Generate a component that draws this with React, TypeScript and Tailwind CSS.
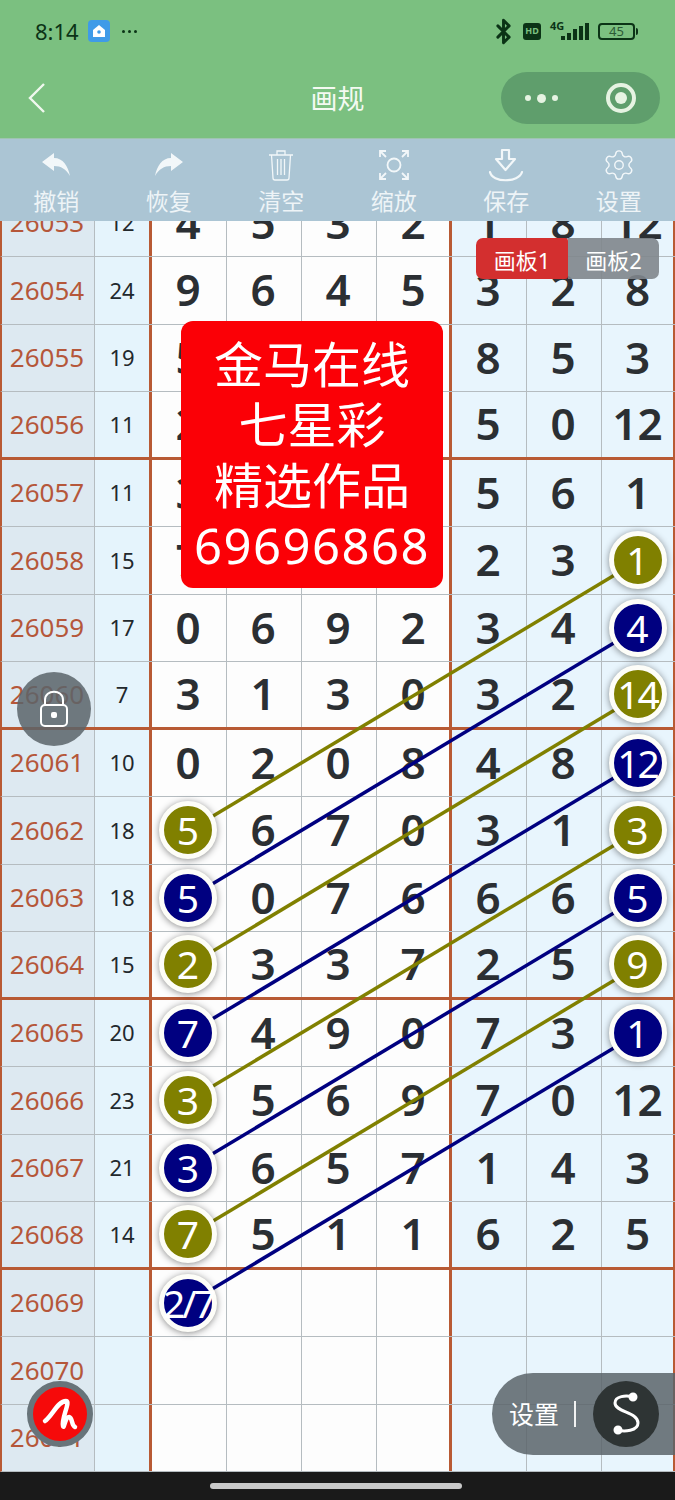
import React from 'react';
import { Bluetooth, Settings } from 'lucide-react';

type Ball = { v: string; c: 'o' | 'n' };
type Row = { id: string; sum?: string; left: (string | Ball)[]; right: (string | Ball)[]; thick?: boolean };

const o = (v: string): Ball => ({ v, c: 'o' });
const n = (v: string): Ball => ({ v, c: 'n' });

const rows: Row[] = [
  { id: '26053', sum: '12', left: ['4', '5', '3', '2'], right: ['1', '8', '12'] },
  { id: '26054', sum: '24', left: ['9', '6', '4', '5'], right: ['3', '2', '8'] },
  { id: '26055', sum: '19', left: ['5', '', '', ''], right: ['8', '5', '3'] },
  { id: '26056', sum: '11', left: ['2', '', '', ''], right: ['5', '0', '12'], thick: true },
  { id: '26057', sum: '11', left: ['3', '', '', ''], right: ['5', '6', '1'] },
  { id: '26058', sum: '15', left: ['7', '', '', ''], right: ['2', '3', o('1')] },
  { id: '26059', sum: '17', left: ['0', '6', '9', '2'], right: ['3', '4', n('4')] },
  { id: '26060', sum: '7', left: ['3', '1', '3', '0'], right: ['3', '2', o('14')], thick: true },
  { id: '26061', sum: '10', left: ['0', '2', '0', '8'], right: ['4', '8', n('12')] },
  { id: '26062', sum: '18', left: [o('5'), '6', '7', '0'], right: ['3', '1', o('3')] },
  { id: '26063', sum: '18', left: [n('5'), '0', '7', '6'], right: ['6', '6', n('5')] },
  { id: '26064', sum: '15', left: [o('2'), '3', '3', '7'], right: ['2', '5', o('9')], thick: true },
  { id: '26065', sum: '20', left: [n('7'), '4', '9', '0'], right: ['7', '3', n('1')] },
  { id: '26066', sum: '23', left: [o('3'), '5', '6', '9'], right: ['7', '0', '12'] },
  { id: '26067', sum: '21', left: [n('3'), '6', '5', '7'], right: ['1', '4', '3'] },
  { id: '26068', sum: '14', left: [o('7'), '5', '1', '1'], right: ['6', '2', '5'], thick: true },
  { id: '26069', left: [n('2/7'), '', '', ''], right: ['', '', ''] },
  { id: '26070', left: ['', '', '', ''], right: ['', '', ''] },
  { id: '26071', left: ['', '', '', ''], right: ['', '', ''] },
];

const Cell = ({ value, blue, last, edge }: { value: string | Ball; blue?: boolean; last?: boolean; edge?: boolean }) => {
  const isBall = typeof value !== 'string';
  let border = 'w-[75px] border-r border-[#b5bcc0] pr-[2px]';
  if (last) border = 'flex-1 border-r-2 border-[#b85a34]';
  if (edge) border = 'w-[75px] border-r-[3px] border-[#b85a34]';
  return (
    <div className={`flex items-center justify-center ${border} ${blue ? 'bg-[#e8f5fd]' : 'bg-[#fdfdfd]'}`}>
      {isBall ? (
        <div
          className={`relative z-20 flex h-[58px] w-[58px] items-center justify-center rounded-full border-[5px] border-[#fdfdf8] text-[39px] font-normal text-white shadow-[0_1px_7px_rgba(0,0,0,0.45)] ${value.c === 'o' ? 'bg-[#808000]' : 'bg-[#000080]'} ${value.v.length > 2 ? 'tracking-[-3px] text-[36px]' : value.v.length > 1 ? 'tracking-[-2px]' : ''}`}
        >
          {value.v}
        </div>
      ) : (
        <span className="pb-[2px] text-[44px] font-semibold text-[#2b2f33]">{value}</span>
      )}
    </div>
  );
};

const ReplyIcon = ({ flip }: { flip?: boolean }) => (
  <svg width="30" height="28" viewBox="0 0 30 28" fill="#f2f7f9" className={flip ? '-scale-x-100' : ''}>
    <path d="M1 11 L13 2 V7 C22 7 27 15 29 25 C25 18 20 15 13 15 V20 Z" />
  </svg>
);

const TrashIcon = () => (
  <svg width="26" height="32" viewBox="0 0 26 32" fill="none" stroke="#f2f7f9" strokeWidth="1.3">
    <path d="M1 6 H25 M9 6 V2 H17 V6" />
    <path d="M3.5 6 L5 29 C5 30 6 31 7 31 H19 C20 31 21 30 21 29 L22.5 6" />
    <path d="M9.5 10 V26 M13 10 V26 M16.5 10 V26" />
  </svg>
);

const ZoomIcon = () => (
  <svg width="32" height="32" viewBox="0 0 32 32" fill="none" stroke="#f2f7f9" strokeWidth="1.8">
    <circle cx="16" cy="16" r="6.5" />
    <path d="M2 8 V2 H8 M2 2 L8 8 M24 2 H30 V8 M30 2 L24 8 M2 24 V30 H8 M2 30 L8 24 M24 30 H30 V24 M30 30 L24 24" />
  </svg>
);

const SaveIcon = () => (
  <svg width="36" height="34" viewBox="0 0 36 34" fill="none" stroke="#f2f7f9" strokeWidth="2.2" strokeLinejoin="round" strokeLinecap="round">
    <path d="M14 2 H21 V11 H27 L17.5 22 L8 11 H14 Z" />
    <path d="M2 24 C4 35 31 35 34 24" />
  </svg>
);

const tools = [
  { label: '撤销', icon: <ReplyIcon /> },
  { label: '恢复', icon: <ReplyIcon flip /> },
  { label: '清空', icon: <TrashIcon /> },
  { label: '缩放', icon: <ZoomIcon /> },
  { label: '保存', icon: <SaveIcon /> },
  { label: '设置', icon: <Settings size={34} strokeWidth={1} color="#f2f7f9" /> },
];

// ball links, y relative to the grid top
const links = [
  { c: '#808000', row: 0 },
  { c: '#000080', row: 1 },
  { c: '#808000', row: 2 },
  { c: '#000080', row: 3 },
  { c: '#808000', row: 4 },
  { c: '#000080', row: 5 },
  { c: '#808000', row: 6 },
  { c: '#000080', row: 7 },
];

const App: React.FC = () => {
  return (
    <div className="relative h-[1500px] w-[675px] overflow-hidden bg-[#1a1a1a] font-['Noto_Sans','Noto_Sans_CJK_SC',sans-serif]">
      {/* status bar + nav */}
      <div className="h-[138px] bg-[#7bc080]">
        <div className="flex h-[62px] items-center justify-between pl-[35px] pr-[37px]">
          <div className="flex items-center gap-[9px]">
            <span className="text-[22px] leading-none text-[#0b3316]">8:14</span>
            <div className="flex h-[22px] w-[22px] items-center justify-center rounded-[4px] bg-[#3f9be8]">
              <svg width="14" height="14" viewBox="0 0 14 14" fill="white">
                <path d="M7 1 L13 6 V13 H1 V6 Z" />
                <circle cx="7" cy="8" r="1.8" fill="#3f9be8" />
              </svg>
            </div>
            <span className="ml-[3px] flex gap-[3px]">
              <i className="h-[3px] w-[3px] rounded-full bg-[#0b3316]" />
              <i className="h-[3px] w-[3px] rounded-full bg-[#0b3316]" />
              <i className="h-[3px] w-[3px] rounded-full bg-[#0b3316]" />
            </span>
          </div>
          <div className="flex items-center text-[#0b3316]">
            <Bluetooth size={27} strokeWidth={2.6} />
            <span className="ml-[6px] flex h-[17px] w-[18px] items-center justify-center rounded-[3px] bg-[#0b3316] text-[9px] font-bold text-[#7bc080]">HD</span>
            <div className="relative ml-[9px] h-[18px] w-[39px]">
              <span className="absolute left-0 top-[-2px] text-[11px] font-bold leading-none">4G</span>
              <div className="absolute bottom-0 right-0 flex items-end gap-[2px]">
                <i className="h-[4px] w-[4px] bg-[#0b3316]" />
                <i className="h-[7px] w-[4px] bg-[#0b3316]" />
                <i className="h-[11px] w-[4px] bg-[#0b3316]" />
                <i className="h-[14px] w-[4px] bg-[#0b3316]" />
                <i className="h-[17px] w-[4px] bg-[#0b3316]" />
              </div>
            </div>
            <div className="ml-[9px] flex items-center">
              <div className="flex h-[17px] w-[37px] items-center justify-center rounded-[4px] border-2 border-[#0b3316] text-[13px] leading-none text-[#2c5a36]">45</div>
              <i className="ml-[1px] h-[7px] w-[2px] rounded-r-sm bg-[#0b3316]" />
            </div>
          </div>
        </div>
        <div className="mt-[10px] grid grid-cols-[175px_1fr_175px] items-center">
          <div className="pl-[27px]">
            <svg width="20" height="32" viewBox="0 0 20 32" fill="none" stroke="#f0f8ee" strokeWidth="2.4">
              <path d="M17 2 L3 16 L17 30" />
            </svg>
          </div>
          <div className="text-center text-[27px] leading-none text-[#f4faf2]">画规</div>
          <div className="ml-[1px] flex h-[52px] w-[159px] items-center rounded-full bg-[#5f9e6c] pl-[24px]">
            <span className="flex items-center gap-[6px]">
              <i className="h-[6px] w-[6px] rounded-full bg-[#e6f3e2]" />
              <i className="h-[9px] w-[9px] rounded-full bg-[#e6f3e2]" />
              <i className="h-[6px] w-[6px] rounded-full bg-[#e6f3e2]" />
            </span>
            <span className="ml-[48px] flex h-[30px] w-[30px] items-center justify-center rounded-full border-[4px] border-[#e6f3e2]">
              <i className="h-[12px] w-[12px] rounded-full bg-[#e6f3e2]" />
            </span>
          </div>
        </div>
      </div>

      {/* toolbar */}
      <div className="grid h-[83px] grid-cols-6 border-t border-[#9fc4b0] bg-[#abc5d4]">
        {tools.map((t) => (
          <div key={t.label} className="flex flex-col items-center pt-[9px]">
            <div className="flex h-[34px] items-center justify-center">{t.icon}</div>
            <span className="mt-[4px] text-[23px] leading-[30px] text-[#eef4f7]">{t.label}</span>
          </div>
        ))}
      </div>

      {/* board */}
      <div className="relative h-[1251px] overflow-hidden">
        <div className="-mt-[31.5px]">
          {rows.map((r) => (
            <div key={r.id} className={`flex h-[67.5px] box-border border-l-2 border-l-[#b85a34] ${r.thick ? 'border-b-[3px] border-b-[#b85a34]' : 'border-b border-b-[#b5bcc0]'}`}>
              <div className="flex w-[93px] items-center justify-center border-r border-[#b5bcc0] bg-[#dde9f1] pr-[2px] text-[26px] text-[#b5573a]">{r.id}</div>
              <div className="flex w-[57px] items-center justify-center border-r-[3px] border-[#b85a34] bg-[#e5f4fc] text-[22px] text-[#22282c]">{r.sum}</div>
              {r.left.map((v, i) => (
                <Cell key={i} value={v} edge={i === 3} />
              ))}
              {r.right.map((v, i) => (
                <Cell key={i} value={v} blue last={i === 2} />
              ))}
            </div>
          ))}
        </div>

        <svg className="absolute left-0 top-0 z-10" width="675" height="1251" viewBox="0 0 675 1251" fill="none">
          {links.map((l) => (
            <line key={l.row} x1="188" y1={610 + l.row * 67.5} x2="638" y2={340 + l.row * 67.5} stroke={l.c} strokeWidth="3.5" />
          ))}
        </svg>
      </div>

      {/* bottom bar */}
      <div className="flex h-[28px] items-center justify-center bg-[#1a1a1a] pr-[3px]">
        <div className="h-[6px] w-[252px] rounded-full bg-[#c9c9c9]" />
      </div>

      {/* notice */}
      <div className="absolute left-[181px] top-[321px] z-30 flex h-[267px] w-[262px] flex-col items-center justify-center rounded-[12px] bg-[#fb0006] text-[49px] leading-[60.5px] text-white">
        <span>金马在线</span>
        <span>七星彩</span>
        <span>精选作品</span>
        <span className="tracking-[1.5px]">69696868</span>
      </div>

      {/* board tabs */}
      <div className="absolute left-[476px] top-[238px] z-30 flex h-[41px] text-[22px] leading-none text-white">
        <div className="flex w-[92px] items-center justify-center rounded-l-[7px] rounded-r-[3px] bg-[#d32f2f] pt-[2px]">画板1</div>
        <div className="flex w-[91px] items-center justify-center rounded-r-[7px] bg-[#7f868c]/90 pt-[2px]">画板2</div>
      </div>

      {/* lock */}
      <div className="absolute left-[17px] top-[672px] z-30 flex h-[74px] w-[74px] items-center justify-center rounded-full bg-[#5b646a]/85">
        <svg width="30" height="38" viewBox="0 0 30 38" fill="none" stroke="white" strokeWidth="2">
          <rect x="2" y="15" width="26" height="21" rx="4" />
          <path d="M6 15 V10 C6 -1 24 -1 24 10 V15" />
          <rect x="12" y="22" width="6" height="6" rx="2" fill="white" stroke="none" />
        </svg>
      </div>

      {/* logo */}
      <div className="absolute left-[27px] top-[1381px] z-30 flex h-[66px] w-[66px] items-center justify-center rounded-full border-[6px] border-[#68747a] bg-[#f60a0a]">
        <svg width="40" height="40" viewBox="-20 -20 40 40" fill="none" stroke="white" strokeWidth="4.5" strokeLinecap="round" strokeLinejoin="round">
          <path d="M-15 7 C-8 2 -2 -13 6 -13 C11 -13 1 5 3 12 C4 16 5 3 9 3 C13 4 11 11 15 13" />
        </svg>
      </div>

      {/* settings pill */}
      <div className="absolute right-0 top-[1373px] z-30 flex h-[82px] w-[183px] items-center rounded-l-[41px] bg-[#5b646a]/85 pl-[17px]">
        <span className="text-[25px] leading-none text-white">设置</span>
        <i className="ml-[15px] h-[26px] w-[2px] bg-white/90" />
        <div className="ml-[17px] flex h-[66px] w-[66px] items-center justify-center rounded-full bg-[#2e3434]">
          <svg width="36" height="44" viewBox="0 0 36 44" fill="none" stroke="white" strokeWidth="3" strokeLinecap="round">
            <path d="M25 5 C18 3 7 4 7 11 C7 20 30 20 30 31 C30 39 16 40 10 38" />
            <circle cx="25" cy="5" r="3" fill="white" />
            <circle cx="10" cy="38" r="3" fill="white" />
          </svg>
        </div>
      </div>
    </div>
  );
};

export default App;
